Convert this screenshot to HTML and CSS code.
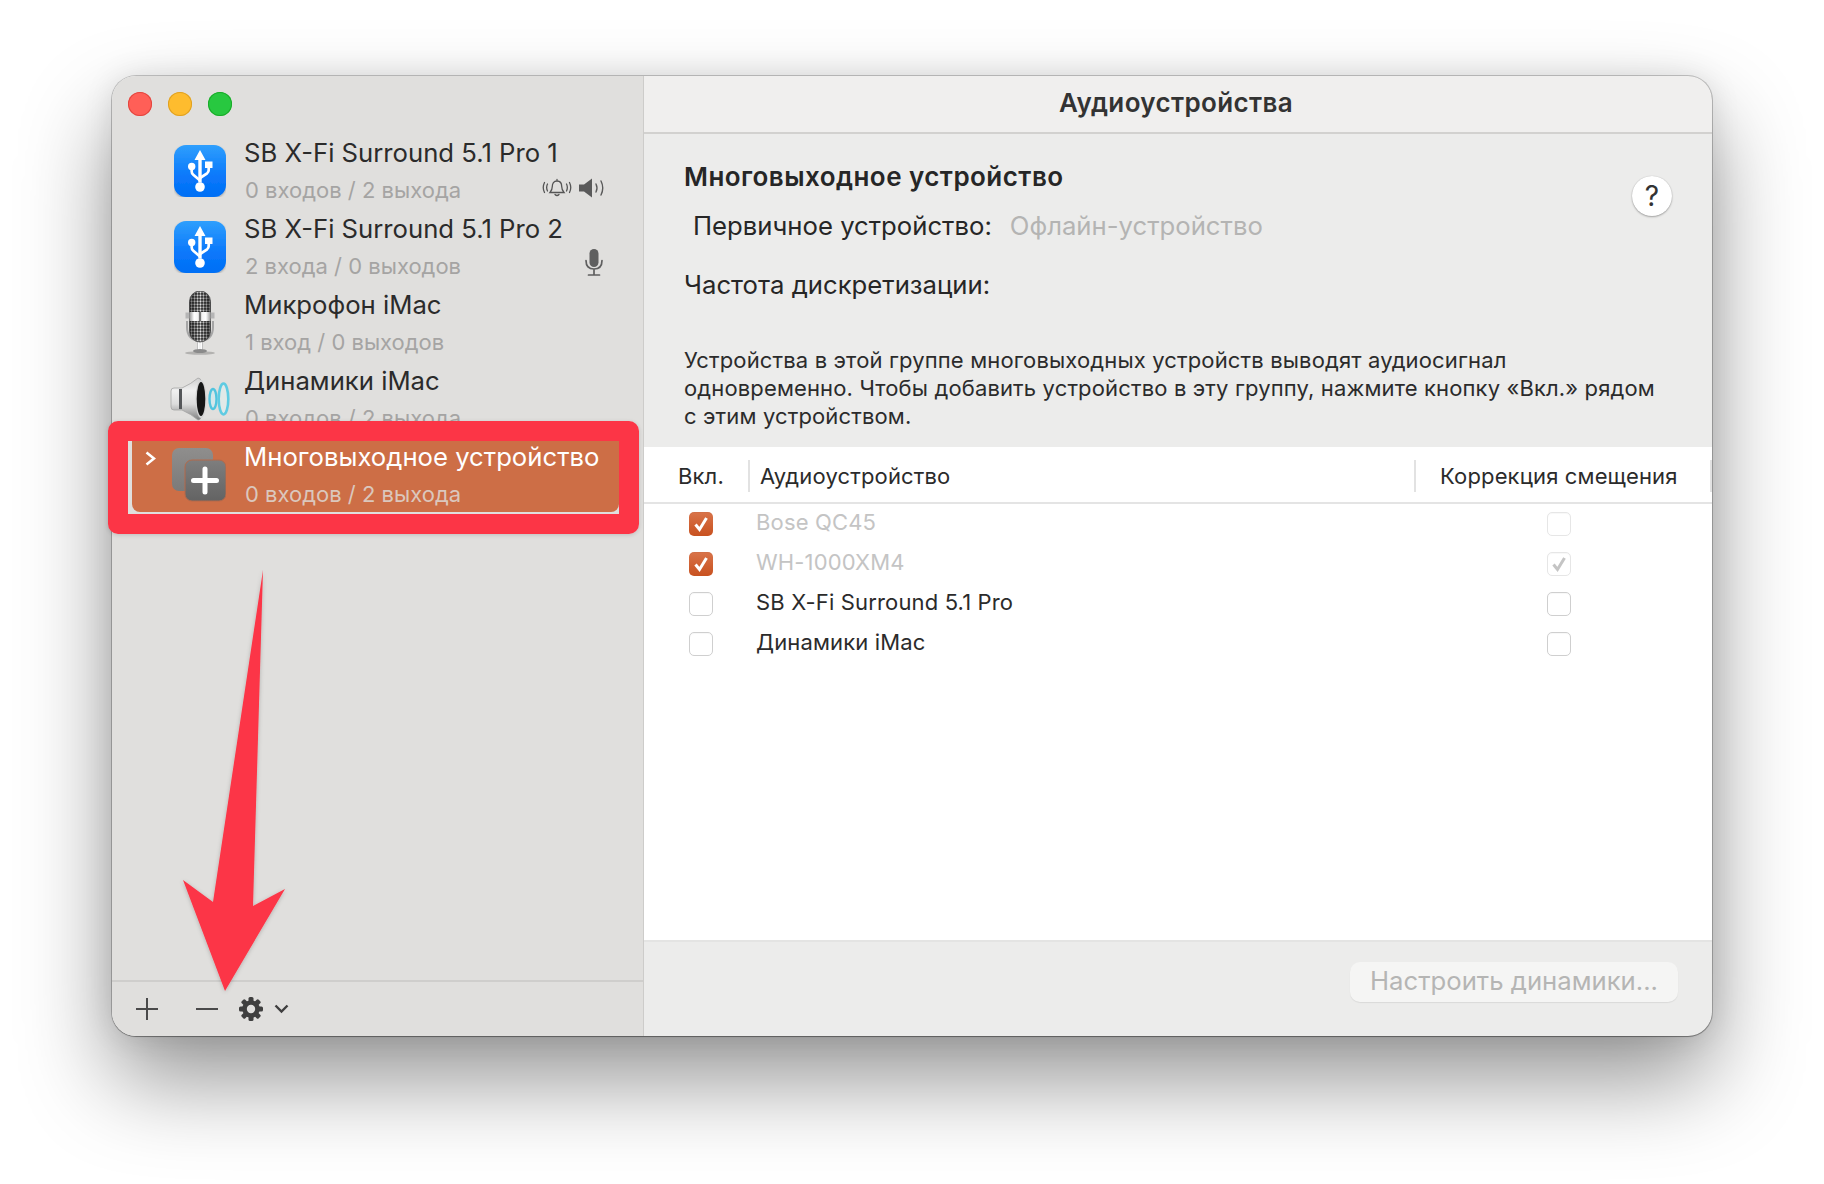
FILE: index.html
```html
<!DOCTYPE html>
<html lang="ru">
<head>
<meta charset="utf-8">
<title>Аудиоустройства</title>
<link rel="stylesheet" href="styles.css">
</head>
<body>
<div class="stage">
  <div class="window">
    <aside class="sidebar">
      <div class="traffic">
        <span class="light red"></span><span class="light yellow"></span><span class="light green"></span>
      </div>
      <div class="devices">
        <div class="device">
          <span class="chev"></span>
          <span class="dev-icon"><svg width="52" height="52" viewBox="0 0 52 52"><defs><linearGradient id="usbg" x1="0" y1="0" x2="0" y2="1"><stop offset="0" stop-color="#2f9ffd"/><stop offset=".6" stop-color="#0a78fb"/><stop offset="1" stop-color="#006ff5"/></linearGradient><filter id="sh" x="-20%" y="-20%" width="140%" height="140%"><feDropShadow dx="0" dy="1" stdDeviation="1" flood-opacity=".3"/></filter></defs><rect x="0" y="0" width="52" height="52" rx="12" fill="url(#usbg)" filter="url(#sh)"/><path d="M26 5l-5.500 10h3.800v22.500h3.400V15h3.800z" fill="#fff"/><circle cx="26" cy="42" r="4.800" fill="#fff"/><circle cx="17.700" cy="21.500" r="3.700" fill="#fff"/><rect x="31" y="16.500" width="7.500" height="6.500" fill="#fff"/><path d="M17.700 22v4.500q0 2 1.600 3.300l6.700 5.700M34.700 22v3q0 2-1.600 3.300L26 33" fill="none" stroke="#fff" stroke-width="2.700"/></svg></span>
          <div class="dev-text">
            <div class="dev-name">SB X-Fi Surround 5.1 Pro 1</div>
            <div class="dev-sub">0 входов / 2 выхода</div>
          </div>
          <div class="badges badges-out">
            <svg width="30" height="20" viewBox="0 0 30 20" fill="none" stroke="#555" stroke-width="1.300" stroke-linecap="round"><path d="M15 3c-3.300 0-4.700 2.600-4.700 5.500 0 3-1 4.500-2.300 6h14c-1.300-1.500-2.300-3-2.300-6C19.700 5.600 18.300 3 15 3zM15 1.500V3M13 16.500q2 2 4 0"/><path d="M5.500 6q-1.700 3.500 0 7M2.500 4.500q-2.500 5 0 10M24.500 6q1.700 3.500 0 7M27.500 4.500q2.500 5 0 10"/></svg>
            <svg width="27" height="20" viewBox="0 0 27 20"><path d="M0 6.500h5L13 .5v19l-8-6H0z" fill="#5a5a5a"/><path d="M17 6q2 4 0 8M22 3q3.500 7 0 14" fill="none" stroke="#5a5a5a" stroke-width="1.400" stroke-linecap="round"/></svg>
          </div>
        </div>
        <div class="device">
          <span class="chev"></span>
          <span class="dev-icon"><svg width="52" height="52" viewBox="0 0 52 52"><rect x="0" y="0" width="52" height="52" rx="12" fill="url(#usbg)" filter="url(#sh)"/><path d="M26 5l-5.500 10h3.800v22.500h3.400V15h3.800z" fill="#fff"/><circle cx="26" cy="42" r="4.800" fill="#fff"/><circle cx="17.700" cy="21.500" r="3.700" fill="#fff"/><rect x="31" y="16.500" width="7.500" height="6.500" fill="#fff"/><path d="M17.700 22v4.500q0 2 1.600 3.300l6.700 5.700M34.700 22v3q0 2-1.600 3.300L26 33" fill="none" stroke="#fff" stroke-width="2.700"/></svg></span>
          <div class="dev-text">
            <div class="dev-name">SB X-Fi Surround 5.1 Pro 2</div>
            <div class="dev-sub">2 входа / 0 выходов</div>
          </div>
          <div class="badges badges-in">
            <svg width="18" height="27" viewBox="0 0 18 27"><rect x="4.500" y="0" width="9" height="18" rx="4.500" fill="#5f5f5f"/><path d="M1 11.500q0 8.500 8 8.500t8-8.500M9 20v6M3.500 26h11" fill="none" stroke="#5f5f5f" stroke-width="1.700" stroke-linecap="round"/></svg>
          </div>
        </div>
        <div class="device">
          <span class="chev"></span>
          <span class="dev-icon"><svg width="32" height="64" viewBox="0 0 32 64"><defs><pattern id="mesh" width="3" height="3" patternUnits="userSpaceOnUse"><rect width="3" height="3" fill="#262626"/><circle cx="1.500" cy="1.500" r="1.150" fill="#e4e4e4"/></pattern><linearGradient id="chrome" x1="0" y1="0" x2="1" y2="0"><stop offset="0" stop-color="#999"/><stop offset=".22" stop-color="#fff"/><stop offset=".42" stop-color="#f2f2f2"/><stop offset=".5" stop-color="#444"/><stop offset=".58" stop-color="#f2f2f2"/><stop offset=".78" stop-color="#fff"/><stop offset="1" stop-color="#999"/></linearGradient><linearGradient id="gloss" x1="0" y1="0" x2="1" y2="0"><stop offset="0" stop-color="#000" stop-opacity=".5"/><stop offset=".5" stop-color="#000" stop-opacity="0"/><stop offset="1" stop-color="#000" stop-opacity=".5"/></linearGradient></defs><ellipse cx="16" cy="62" rx="15" ry="1.800" fill="#000" opacity=".2"/><path d="M3 30v6q0 13 13 14 13-1 13-14v-6" fill="none" stroke="#a5a5a5" stroke-width="2"/><rect x="13" y="50" width="6" height="10" fill="url(#chrome)"/><ellipse cx="16" cy="60" rx="7" ry="2" fill="#8a8a8a"/><rect x="5.500" y="0" width="21" height="51" rx="10.500" fill="url(#mesh)" stroke="#666" stroke-width="1"/><rect x="5.500" y="0" width="21" height="51" rx="10.500" fill="url(#gloss)"/><rect x="1.500" y="21.500" width="4" height="6" fill="#b5b5b5"/><rect x="26.500" y="21.500" width="4" height="6" fill="#b5b5b5"/><rect x="5.500" y="21" width="21" height="9" fill="url(#chrome)"/></svg></span>
          <div class="dev-text">
            <div class="dev-name">Микрофон iMac</div>
            <div class="dev-sub">1 вход / 0 выходов</div>
          </div>
        </div>
        <div class="device">
          <span class="chev"></span>
          <span class="dev-icon"><svg width="60" height="44" viewBox="0 0 60 44"><defs><linearGradient id="cone" x1="0" y1="0" x2="0" y2="1"><stop offset="0" stop-color="#cfcfcf"/><stop offset=".3" stop-color="#f0f0f0"/><stop offset=".62" stop-color="#dcdcdc"/><stop offset="1" stop-color="#7f7f7f"/></linearGradient></defs><path d="M1 14q0-3 3-3h8Q21 7 28 1q5-1 5 21t-5 21q-7-6-16-10H4q-3 0-3-3z" fill="url(#cone)" stroke="#a5a5a5" stroke-width=".8"/><rect x="9" y="12" width="3" height="20" fill="#55575a"/><ellipse cx="31" cy="22" rx="5.500" ry="19" fill="#d4d4d4"/><ellipse cx="31" cy="22" rx="4.300" ry="17" fill="#161616"/><ellipse cx="43" cy="22" rx="3.500" ry="10" fill="#c9f0f7" fill-opacity=".5" stroke="#52c4de" stroke-width="2.400"/><ellipse cx="53.500" cy="22" rx="4.800" ry="15.500" fill="#e4f7fa" fill-opacity=".4" stroke="#5fcbe2" stroke-width="2.600"/></svg></span>
          <div class="dev-text">
            <div class="dev-name">Динамики iMac</div>
            <div class="dev-sub">0 входов / 2 выхода</div>
          </div>
        </div>
        <div class="device is-selected">
          <span class="chev"><svg width="11" height="15" viewBox="0 0 11 15"><path d="M1.500 1.500l7.500 6-7.500 6" fill="none" stroke="#fff" stroke-width="2.600"/></svg></span>
          <span class="dev-icon"><svg class="stack-art" width="54" height="54" viewBox="0 0 54 54"><defs><linearGradient id="stackb" x1="0" y1="0" x2="0" y2="1"><stop offset="0" stop-color="#8f8e8d"/><stop offset="1" stop-color="#7b7a79"/></linearGradient><linearGradient id="stackf" x1="0" y1="0" x2="0" y2="1"><stop offset="0" stop-color="#7e7e7e"/><stop offset="1" stop-color="#636363"/></linearGradient></defs><rect x="0" y="0" width="41" height="43" rx="7" fill="url(#stackb)"/><rect x="13" y="12" width="41" height="41" rx="7" fill="url(#stackf)" stroke="#b3694a" stroke-width="1"/><path d="M33 21v23M21.500 32.500h23" stroke="#fff" stroke-width="5" stroke-linecap="round"/></svg></span>
          <div class="dev-text">
            <div class="dev-name">Многовыходное устройство</div>
            <div class="dev-sub">0 входов / 2 выхода</div>
          </div>
        </div>
      </div>
      <div class="side-footer">
        <svg width="22" height="22" viewBox="0 0 22 22"><path d="M11 0v22M0 11h22" stroke="#4a4a4a" stroke-width="2"/></svg>
        <svg class="foot-minus" width="22" height="22" viewBox="0 0 22 22"><path d="M0 11h22" stroke="#4a4a4a" stroke-width="2"/></svg>
        <svg class="foot-gear" width="24" height="24" viewBox="0 0 24 24"><g fill="#3f3f3f"><rect x="9.500" y="0" width="5" height="24" rx="1.500"/><rect x="9.500" y="0" width="5" height="24" rx="1.500" transform="rotate(45 12 12)"/><rect x="9.500" y="0" width="5" height="24" rx="1.500" transform="rotate(90 12 12)"/><rect x="9.500" y="0" width="5" height="24" rx="1.500" transform="rotate(135 12 12)"/></g><circle cx="12" cy="12" r="6.500" fill="none" stroke="#3f3f3f" stroke-width="4.500"/><circle cx="12" cy="12" r="4.200" fill="#e0dfdd"/></svg>
        <svg class="foot-caret" width="15" height="10" viewBox="0 0 15 10"><path d="M1.500 1.500l6 6 6-6" fill="none" stroke="#3f3f3f" stroke-width="2.400"/></svg>
      </div>
    </aside>
    <main class="pane">
      <header class="titlebar">Аудиоустройства</header>
      <section class="form">
        <div class="form-top">
          <div>
            <h2 class="form-heading">Многовыходное устройство</h2>
            <div class="form-primary"><span>Первичное устройство:</span><span class="form-muted">Офлайн-устройство</span></div>
          </div>
          <button class="help">?</button>
        </div>
        <div class="form-rate">Частота дискретизации:</div>
        <p class="form-note">Устройства в этой группе многовыходных устройств выводят аудиосигнал<br>одновременно. Чтобы добавить устройство в эту группу, нажмите кнопку «Вкл.» рядом<br>с этим устройством.</p>
      </section>
      <section class="table">
        <div class="thead">
          <div class="th th-on"><span>Вкл.</span></div>
          <div class="th th-name"><span>Аудиоустройство</span></div>
          <div class="th th-drift"><span>Коррекция смещения</span></div>
        </div>
        <div class="trow">
          <span class="cell-on"><span class="box on"><svg width="18" height="18" viewBox="0 0 18 18"><path d="M3.500 9.500l4 5L14.500 3" fill="none" stroke="#fff" stroke-width="3"/></svg></span></span>
          <span class="cell-name dim">Bose QC45</span>
          <span class="cell-drift"><span class="box faint"></span></span>
        </div>
        <div class="trow">
          <span class="cell-on"><span class="box on"><svg width="18" height="18" viewBox="0 0 18 18"><path d="M3.500 9.500l4 5L14.500 3" fill="none" stroke="#fff" stroke-width="3"/></svg></span></span>
          <span class="cell-name dim">WH-1000XM4</span>
          <span class="cell-drift"><span class="box faint"><svg width="18" height="18" viewBox="0 0 18 18"><path d="M3.500 9.500l4 5L14.500 3" fill="none" stroke="#c4c4c4" stroke-width="3"/></svg></span></span>
        </div>
        <div class="trow">
          <span class="cell-on"><span class="box"></span></span>
          <span class="cell-name">SB X-Fi Surround 5.1 Pro</span>
          <span class="cell-drift"><span class="box"></span></span>
        </div>
        <div class="trow">
          <span class="cell-on"><span class="box"></span></span>
          <span class="cell-name">Динамики iMac</span>
          <span class="cell-drift"><span class="box"></span></span>
        </div>
      </section>
      <footer class="pane-footer"><button class="config">Настроить динамики...</button></footer>
    </main>
  </div>
  <div class="ring"></div>
  <svg class="arrow" width="1824" height="1184" viewBox="0 0 1824 1184"><defs><filter id="arrowsh" x="-20%" y="-5%" width="140%" height="110%"><feDropShadow dx="0" dy="1" stdDeviation="2" flood-opacity=".22"/></filter></defs><path d="M263 570 L253 906 L285 889 L225 991 L183 880 L213 902 Z" fill="#fc3546" filter="url(#arrowsh)"/></svg>
</div>
</body>
</html>
```

FILE: styles.css
```css
* { box-sizing: border-box; }
html, body { margin: 0; padding: 0; }
body {
  width: 1824px;
  height: 1184px;
  background: #fff;
  font-family: Inter, "Noto Sans", "Liberation Sans", sans-serif;
  color: #262626;
  overflow: hidden;
}
.stage {
  position: relative;
  width: 1824px;
  height: 1184px;
  padding: 76px 112px 148px;
}
.window {
  display: flex;
  width: 100%;
  height: 100%;
  border-radius: 24px;
  overflow: hidden;
}
.stage::before {
  content: "";
  position: absolute;
  left: 112px;
  top: 76px;
  width: 1600px;
  height: 960px;
  border-radius: 24px;
  box-shadow: 0 0 0 1px rgba(0, 0, 0, .2), 0 1px 1px rgba(0, 0, 0, .25), 0 44px 90px rgba(0, 0, 0, .42), 0 0 30px rgba(0, 0, 0, .1);
}

/* sidebar */
.sidebar {
  position: relative;
  width: 532px;
  flex: none;
  display: flex;
  flex-direction: column;
  background: #e0dfdd;
  border-right: 1px solid #cdccca;
}
.traffic {
  height: 56px;
  flex: none;
  display: flex;
  gap: 16px;
  padding: 16px 0 0 16px;
}
.light { width: 24px; height: 24px; border-radius: 50%; }
.red { background: #ff5f57; box-shadow: inset 0 0 0 1px #e2463f; }
.yellow { background: #febc2e; box-shadow: inset 0 0 0 1px #dfa123; }
.green { background: #28c840; box-shadow: inset 0 0 0 1px #1aab29; }
.devices { flex: 1; }
.device {
  display: flex;
  height: 76px;
  margin: 0 24px 0 20px;
  padding-top: 2px;
  border-radius: 0 0 8px 8px;
}
.chev {
  width: 42px;
  flex: none;
  padding: 13px 0 0 13px;
}
.chev svg { display: block; }
.dev-icon {
  width: 52px;
  height: 74px;
  flex: none;
  display: flex;
  align-items: center;
  justify-content: center;
}
.dev-icon svg { flex: none; display: block; }
.stack-art { margin-right: 2px; }
.dev-text { margin-left: 18px; flex: 1; min-width: 0; }
.dev-name { font-size: 25.700px; line-height: 38px; white-space: nowrap; color: #2b2b2b; }
.dev-sub { font-size: 22px; line-height: 36px; margin-left: 1px; white-space: nowrap; color: #a5a4a3; }
.badges { display: flex; align-items: center; gap: 7px; flex: none; }
.badges-out { align-self: flex-end; margin: 0 13px 10px 0; }
.badges-in { align-self: flex-end; margin: 0 16px 8px 0; }
.is-selected { background: #cd6e46; }
.is-selected .dev-name { color: #fff; }
.is-selected .dev-sub { color: #dbc7bd; }
.side-footer {
  height: 56px;
  flex: none;
  display: flex;
  align-items: center;
  padding: 0 0 0 24px;
  border-top: 2px solid #cfcecc;
}
.foot-minus { margin-left: 38px; }
.foot-gear { margin-left: 21px; }
.foot-caret { margin-left: 11px; }

/* pane */
.pane {
  flex: 1;
  display: flex;
  flex-direction: column;
  background: #ececeb;
  min-width: 0;
}
.titlebar {
  height: 58px;
  flex: none;
  display: flex;
  align-items: center;
  justify-content: center;
  background: #f0efee;
  border-bottom: 2px solid #d2d1cf;
  font-size: 26px;
  font-weight: 600;
  letter-spacing: .35px;
  color: #333;
  padding: 0 4px 4px 0;
}
.form { height: 313px; flex: none; padding: 26px 40px 0 40px; }
.form-top { display: flex; justify-content: space-between; align-items: flex-start; }
.form-heading { margin: 0; font-size: 26px; line-height: 34px; font-weight: 600; letter-spacing: .45px; color: #262626; }
.form-primary {
  display: flex;
  gap: 18px;
  padding-left: 9px;
  margin-top: 15px;
  font-size: 25.700px;
  line-height: 34px;
}
.form-muted { color: #b4b4b3; }
.help {
  width: 40px;
  height: 40px;
  margin-top: 16px;
  border: 0;
  border-radius: 50%;
  background: #fff;
  box-shadow: 0 1px 2px rgba(0, 0, 0, .3), 0 0 1px rgba(0, 0, 0, .2);
  font: 28px/40px Inter, sans-serif;
  color: #333;
  padding: 0;
}
.form-rate { font-size: 25.700px; line-height: 34px; margin-top: 25px; }
.form-note { margin: 44px 0 0; font-size: 22px; line-height: 28px; letter-spacing: .14px; color: #2b2b2b; white-space: nowrap; }
.table { flex: 1; background: #fff; }
.thead {
  display: grid;
  grid-template-columns: 106px 1fr 296px;
  height: 57px;
  padding-top: 13px;
  border-bottom: 2px solid #e4e4e4;
  font-size: 22px;
  letter-spacing: .15px;
  color: #2b2b2b;
}
.th { height: 32px; display: flex; align-items: center; border-right: 2px solid #e2e2e2; }
.th-on { padding-left: 34px; }
.th-name { padding-left: 10px; }
.th-drift { padding-left: 24px; }
.trow {
  display: grid;
  grid-template-columns: 105px 1fr 296px;
  height: 40px;
  align-items: center;
  font-size: 22px;
  letter-spacing: .15px;
  color: #2b2b2b;
}
.cell-on { padding-left: 45px; display: flex; }
.cell-name { padding-left: 7px; margin-top: -5px; }
.cell-drift { padding-left: 131px; display: flex; }
.dim { color: #c4c4c4; }
.box {
  width: 24px;
  height: 24px;
  display: flex;
  align-items: center;
  justify-content: center;
  border-radius: 5px;
  background: #fff;
  border: 1px solid #cfcfcf;
  box-shadow: inset 0 1px 1px rgba(0, 0, 0, .03);
}
.box.faint { border-color: #e6e6e6; }
.box.on { border: 0; background: linear-gradient(#d9744a, #c8511f); }
.pane-footer {
  height: 96px;
  flex: none;
  padding: 20px 34px 0 0;
  display: flex;
  justify-content: flex-end;
  align-items: flex-start;
  border-top: 2px solid #e4e4e3;
}
.config {
  width: 328px;
  height: 40px;
  border: 0;
  border-radius: 10px;
  background: #f5f5f4;
  box-shadow: 0 1px 1px rgba(0, 0, 0, .08);
  font: 25.700px/38px Inter, sans-serif;
  color: #b5b5b4;
  padding: 0 0 2px;
}

/* annotation overlays */
.ring {
  position: absolute;
  left: 108px;
  top: 421px;
  width: 531px;
  height: 113px;
  border: 20px solid #fc3546;
  border-radius: 10px;
  box-shadow: 0 1px 4px rgba(0, 0, 0, .15);
}
.arrow { position: absolute; left: 0; top: 0; pointer-events: none; }
```
